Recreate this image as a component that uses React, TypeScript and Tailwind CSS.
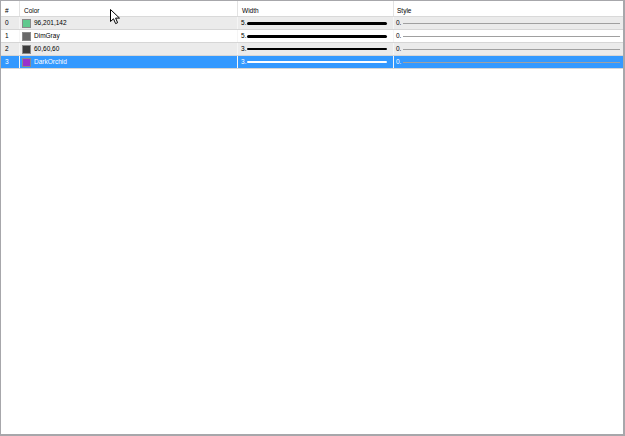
import React from "react";

type Row = { id: number; name: string; swatch: string; width: number; selected?: boolean; shade?: boolean };

const rows: Row[] = [
  { id: 0, name: "96,201,142", swatch: "#60c98e", width: 5, shade: true },
  { id: 1, name: "DimGray", swatch: "#696969", width: 5 },
  { id: 2, name: "60,60,60", swatch: "#3c3c3c", width: 3, shade: true },
  { id: 3, name: "DarkOrchid", swatch: "#9932cc", width: 3, selected: true },
];

function Cursor() {
  return (
    <svg className="absolute left-[109px] top-[8px]" width="12" height="16" viewBox="0 0 12 16">
      <path d="M0.5 0.5 L0.5 12.5 L3.5 9.8 L5.6 14.6 L7.6 13.7 L5.6 9.1 L9.5 9.1 Z" fill="#fff" stroke="#000" strokeWidth="1" strokeLinejoin="round" />
    </svg>
  );
}

export default function App() {
  return (
    <div
      className="relative w-[625px] h-[436px] bg-white border-l border-t border-r-2 border-b-2 border-[#a7a7ab] text-[6.5px] text-black overflow-hidden"
      style={{ fontFamily: '"Liberation Sans", Arial, sans-serif' }}
    >
      <div className="flex h-[16px] border-b border-[#d9d9d9] bg-white">
        <div className="w-[19px] shrink-0 border-r border-[#e3e3e3] pl-[4px] pt-[5px]">#</div>
        <div className="w-[218px] shrink-0 border-r border-[#e3e3e3] pl-[4px] pt-[5px]">Color</div>
        <div className="w-[156px] shrink-0 border-r border-[#e3e3e3] pl-[4px] pt-[5px]">Width</div>
        <div className="flex-1 pl-[3px] pt-[5px]">Style</div>
      </div>
      {rows.map((r) => {
        const bg = r.selected ? "bg-[#3399ff] text-white" : r.shade ? "bg-[#ebebeb]" : "bg-white";
        return (
          <div key={r.id} className={`flex h-[13px] border-b border-[#d6d6d6] ${bg}`}>
            <div className="w-[19px] shrink-0 border-r border-[#f5f5f5] pl-[4px] flex items-center">{r.id}</div>
            <div className="w-[218px] shrink-0 border-r border-[#f5f5f5] pl-[2px] flex items-center gap-[3px]">
              <span className="w-[9px] h-[9px] border border-[#8a8a8a] shrink-0" style={{ backgroundColor: r.swatch }} />
              <span>{r.name}</span>
            </div>
            <div className="w-[156px] shrink-0 border-r border-[#f5f5f5] pl-[3px] flex items-center gap-[1px]">
              <span>{r.width}.</span>
              <span
                className={`w-[140px] rounded-full ${r.selected ? "bg-white" : "bg-black"}`}
                style={{ height: r.width === 5 ? 3 : 2 }}
              />
            </div>
            <div className="flex-1 pl-[2px] pr-[3px] flex items-center gap-[2px]">
              <span>0.</span>
              <span className="flex-1 h-px bg-[#a0a0a0]" />
            </div>
          </div>
        );
      })}
      <Cursor />
    </div>
  );
}
